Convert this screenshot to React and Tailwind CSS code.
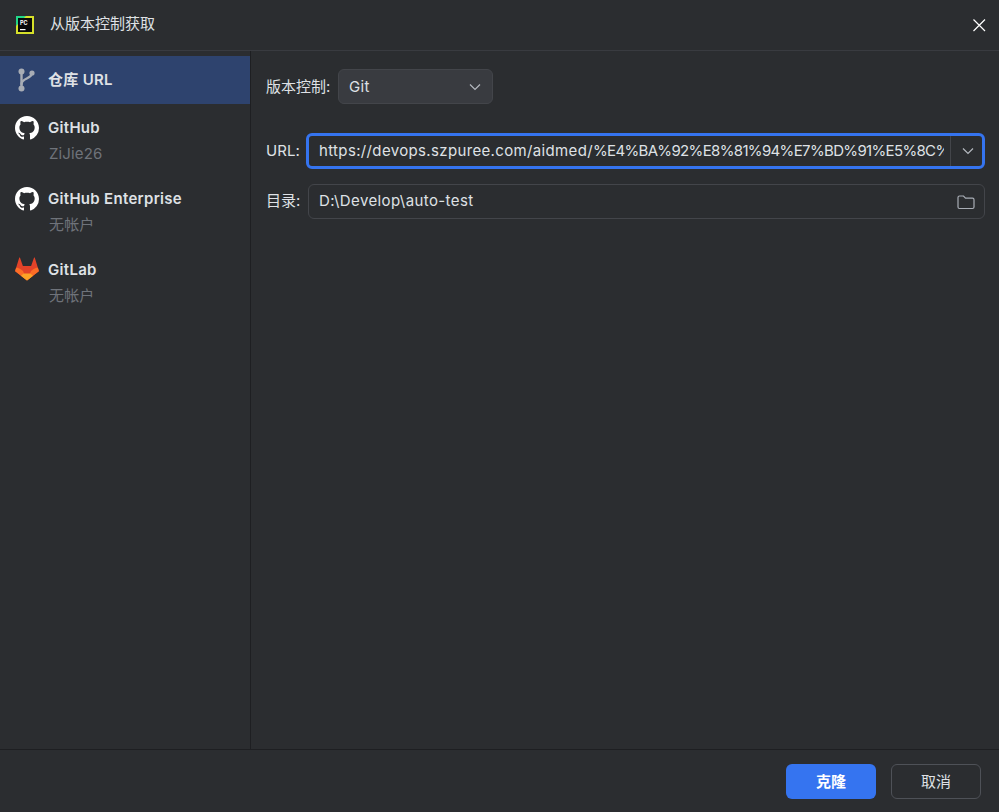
import React from "react";

function GitHubIcon() {
  return (
    <svg viewBox="0 0 16 16" className="w-6 h-6 shrink-0" fill="#ffffff">
      <path d="M8 0C3.58 0 0 3.58 0 8c0 3.54 2.29 6.53 5.47 7.59.4.07.55-.17.55-.38 0-.19-.01-.82-.01-1.49-2.01.37-2.53-.49-2.69-.94-.09-.23-.48-.94-.82-1.13-.28-.15-.68-.52-.01-.53.63-.01 1.08.58 1.23.82.72 1.21 1.87.87 2.33.66.07-.52.28-.87.51-1.07-1.78-.2-3.64-.89-3.64-3.95 0-.87.31-1.59.82-2.15-.08-.2-.36-1.02.08-2.12 0 0 .67-.21 2.2.82.64-.18 1.32-.27 2-.27s1.36.09 2 .27c1.53-1.04 2.2-.82 2.2-.82.44 1.1.16 1.92.08 2.12.51.56.82 1.27.82 2.15 0 3.07-1.87 3.75-3.65 3.95.29.25.54.73.54 1.48 0 1.07-.01 1.93-.01 2.2 0 .21.15.46.55.38A8.01 8.01 0 0 0 16 8c0-4.42-3.58-8-8-8z" />
    </svg>
  );
}

function GitLabIcon() {
  return (
    <svg viewBox="0 0 24 24" className="w-6 h-6 shrink-0 -mt-[1px]">
      <path d="M12 23.5 0.5 14.6c-.3-.2-.4-.6-.3-.9L4.2 0.8c.1-.4.6-.4.8 0L7.9 9h8.2L19 .8c.2-.4.7-.4.8 0l4 12.9c.1.3 0 .7-.3.9z" fill="#e24329" />
      <path d="M.2 13.7c-.1.3 0 .7.3.9L6 18.8l6 4.7-4-9.5-2-1.6C4 11 1.5 10.5 1 11z" fill="#fc6d26" />
      <path d="M23.8 13.7c.1.3 0 .7-.3.9L18 18.8l-6 4.7 4-9.5 2-1.6c2-1.4 4.5-1.9 5-1.4z" fill="#fc6d26" />
      <path d="M6 18.8 12 23.5l6-4.7-2.8-2.2H8.8z" fill="#fca326" />
    </svg>
  );
}

function SidebarAccount({ icon, name, sub }) {
  return (
    <div className="flex h-[71px] pl-[15px] pt-[11px] gap-[9px]">
      {icon}
      <div className="flex flex-col">
        <span className="text-[15px] leading-[24px] font-semibold tracking-[0.3px] text-[#dfe1e5]">{name}</span>
        <span className="text-[15px] leading-[24px] mt-[2px] ml-[1px] tracking-[0.15px] text-[#6f737a]">{sub}</span>
      </div>
    </div>
  );
}

export default function App() {
  return (
    <div
      className="w-[999px] h-[812px] flex flex-col bg-[#2b2d30] text-[#dfe1e5] overflow-hidden"
      style={{ fontFamily: 'Inter, "Noto Sans CJK SC", sans-serif' }}
    >
      <header className="h-[51px] shrink-0 flex items-center border-b border-[#393b40] pl-[16px] pr-[13px]">
        <svg viewBox="0 0 18 18" className="w-[18px] h-[18px] shrink-0 -mt-[1px]">
          <rect width="18" height="18" fill="#d6e02a" />
          <path d="M0 0h10L0 10z" fill="#21d789" />
          <rect x="2" y="2" width="14" height="14" fill="#0a0a0a" />
          <rect x="4" y="13" width="5.5" height="1.2" fill="#fff" />
          <text x="4" y="8.5" fontSize="5.5" fontWeight="700" fill="#fff" fontFamily="Inter">PC</text>
        </svg>
        <span className="ml-[16px] text-[15px] leading-[20px] -mt-[2px] text-[#dfe1e5]">从版本控制获取</span>
        <svg viewBox="0 0 14 14" className="ml-auto w-[14px] h-[14px]" stroke="#ffffff" strokeWidth="1.2" fill="none">
          <path d="M1.5 1.5 13 13M13 1.5 1.5 13" />
        </svg>
      </header>

      <div className="flex-1 flex min-h-0">
        <aside className="w-[251px] shrink-0 border-r border-[#1e1f22] pt-[5px]">
          <div className="h-[48px] bg-[#2e436e] flex items-center pl-[18px] gap-[13px]">
            <svg viewBox="0 0 17 24" className="w-[17px] h-[24px] shrink-0" fill="none" stroke="#a8adb5" strokeWidth="2.4" strokeLinecap="round">
              <circle cx="3.5" cy="3.5" r="3" fill="#a8adb5" stroke="none" />
              <circle cx="14" cy="5" r="2.6" fill="#a8adb5" stroke="none" />
              <circle cx="3.5" cy="20.5" r="3" fill="#a8adb5" stroke="none" />
              <path d="M3.5 4v16" />
              <path d="M14 5c0 6-10.5 5-10.5 11" />
            </svg>
            <span className="text-[15px] font-semibold tracking-[0.3px] leading-[20px] -mt-[1px] text-[#dfe1e5]">仓库 URL</span>
          </div>
          <div className="mt-[1px]">
            <SidebarAccount icon={<GitHubIcon />} name="GitHub" sub="ZiJie26" />
            <SidebarAccount icon={<GitHubIcon />} name="GitHub Enterprise" sub="无帐户" />
            <SidebarAccount icon={<GitLabIcon />} name="GitLab" sub="无帐户" />
          </div>
        </aside>

        <main className="flex-1 min-w-0 pl-[15px] pr-[14px] pt-[18px] text-[15px]">
          <div className="flex items-center gap-[8px] h-[35px]">
            <span className="w-[64px] shrink-0 whitespace-nowrap mt-[2px]">版本控制:</span>
            <div className="w-[155px] h-[35px] rounded-[6px] border border-[#43454a] bg-[#393b40] flex items-center pl-[10px] pr-[11px] justify-between">
              <span className="tracking-[0.35px] mt-[2px]">Git</span>
              <svg viewBox="0 0 12 8" className="w-[12px] h-[8px]" fill="none" stroke="#b4b8bf" strokeWidth="1.2">
                <path d="M1 1.5 6 6.5 11 1.5" />
              </svg>
            </div>
          </div>

          <div className="flex items-center gap-[8px] mt-[29px] h-[36px]">
            <span className="w-[33px] shrink-0 whitespace-nowrap tracking-[0.1px] -mr-[1px]">URL:</span>
            <div className="flex-1 min-w-0 h-[36px] rounded-[6px] border-[3px] border-[#3574f0] bg-[#2b2d30] flex items-center">
              <span className="flex-1 min-w-0 overflow-hidden whitespace-nowrap pl-[10px] mr-[6px] tracking-[0.35px]">
                https://devops.szpuree.com/aidmed/
                <span className="tracking-[-0.65px]">%E4%BA%92%E8%81%94%E7%BD%91%E5%8C%BB%E9%99%A2.git</span>
              </span>
              <div className="w-[32px] h-full shrink-0 border-l border-[#43454a] flex items-center justify-center pl-[3px]">
                <svg viewBox="0 0 12 8" className="w-[12px] h-[8px]" fill="none" stroke="#b4b8bf" strokeWidth="1.2">
                  <path d="M1 1.5 6 6.5 11 1.5" />
                </svg>
              </div>
            </div>
          </div>

          <div className="flex items-center gap-[8px] mt-[15px] h-[35px]">
            <span className="w-[34px] shrink-0 whitespace-nowrap -mt-[1px]">目录:</span>
            <div className="flex-1 min-w-0 h-[35px] rounded-[6px] border border-[#43454a] bg-[#2b2d30] flex items-center justify-between pl-[10px] pr-[9px]">
              <span className="tracking-[0.4px] -mt-[1px]">D:\Develop\auto-test</span>
              <svg viewBox="0 0 18 16" className="w-[18px] h-[16px]" fill="none" stroke="#a8adb5" strokeWidth="1.2">
                <path d="M1 3.5a1.5 1.5 0 0 1 1.5-1.5h4l2 2.2h7a1.5 1.5 0 0 1 1.5 1.5v7.3a1.5 1.5 0 0 1-1.5 1.5h-13a1.5 1.5 0 0 1-1.5-1.5z" />
              </svg>
            </div>
          </div>
        </main>
      </div>

      <footer className="h-[63px] shrink-0 border-t border-[#1e1f22] flex items-start justify-end pt-[14px] pr-[18px] gap-[15px]">
        <button className="w-[90px] h-[35px] pt-[2px] rounded-[6px] bg-[#3574f0] text-white text-[15px] font-semibold">克隆</button>
        <button className="w-[90px] h-[35px] pt-[2px] rounded-[6px] border border-[#4e5157] text-[#dfe1e5] text-[15px]">取消</button>
      </footer>
    </div>
  );
}
